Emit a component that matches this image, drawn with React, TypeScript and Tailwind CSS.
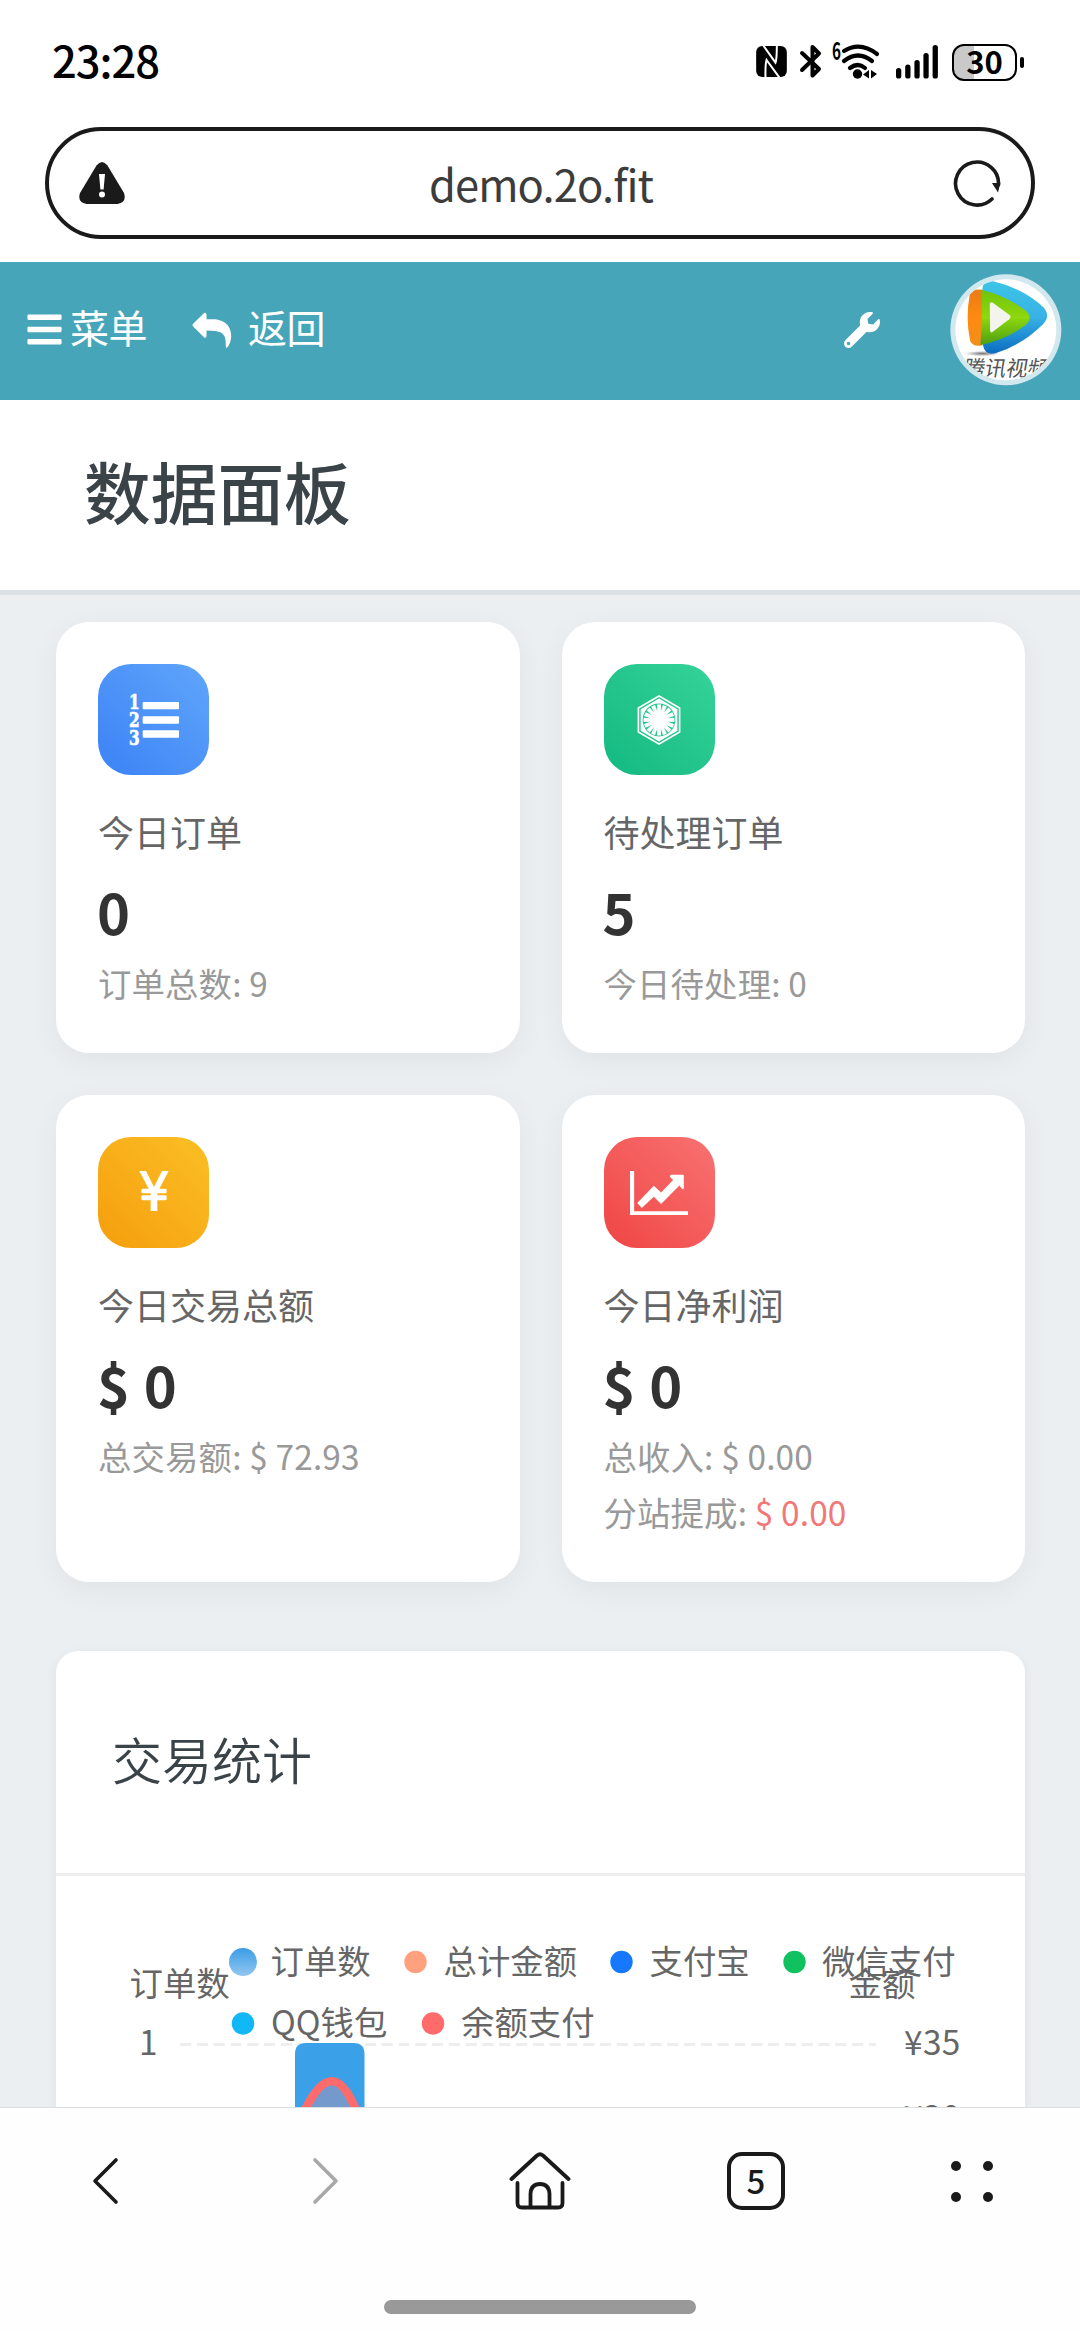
import React from "react";
import { FaBars, FaFirstOrder, FaWrench } from "react-icons/fa";

interface StatProps {
  icon: React.ReactNode;
  iconBg: string;
  label: string;
  value: string;
  children: React.ReactNode;
}

const StatCard = (props: StatProps) => {
  return (
    <div className="rounded-[33px] bg-white p-[42px] shadow-[0_8px_30px_rgba(0,0,0,0.05)]">
      <div
        className={
          "flex h-[111px] w-[111px] items-center justify-center rounded-[33px] text-white " +
          props.iconBg
        }
      >
        {props.icon}
      </div>
      <p className="mt-[29px] h-[54px] text-[36px] leading-[54px] text-[#666]">
        {props.label}
      </p>
      <p className="-ml-px mt-[11px] h-[86px] text-[56px] font-bold leading-[84px] tracking-[0.5px] text-[#333]">
        {props.value}
      </p>
      <div className="text-[33.4px] leading-[56px] tracking-[0.15px] text-[#999]">
        {props.children}
      </div>
    </div>
  );
};

const ListIcon = () => {
  return (
    <svg className="h-[50px] w-[50px] overflow-visible" viewBox="0 0 150 150" fill="currentColor">
      <g fontFamily="DejaVu Serif, serif" fontSize="59" fontWeight="700" stroke="currentColor" strokeWidth="2">
        <text x="0" y="43" textLength="32" lengthAdjust="spacingAndGlyphs">1</text>
        <text x="0" y="96" textLength="32" lengthAdjust="spacingAndGlyphs">2</text>
        <text x="0" y="149" textLength="32" lengthAdjust="spacingAndGlyphs">3</text>
      </g>
      <rect x="41" y="21" width="109" height="22" rx="3" />
      <rect x="41" y="64" width="109" height="22" rx="3" />
      <rect x="41" y="106" width="109" height="22" rx="3" />
    </svg>
  );
};

const StatusBar = () => {
  return (
    <div className="flex h-[127px] items-start justify-between pl-[52px] pr-14 text-black">
      <span className="mt-[28px] text-[43.5px] font-medium leading-[64px] tracking-[-1px]">
        23:28
      </span>
      <div className="mt-[42px] flex h-10 items-start">
        {/* nfc */}
        <svg className="mt-[4px] h-[31px] w-[31px]" viewBox="0 0 92 93">
          <rect width="92" height="93" rx="18" />
          <path
            d="M21 -2 L58 50 Q62 40 62 -2 M70 95 L31 42 Q27 55 28 95"
            fill="none"
            stroke="#fff"
            strokeWidth="6"
          />
        </svg>
        {/* bluetooth */}
        <svg className="ml-3 mt-[2px] h-[35px] w-[24px]" viewBox="0 0 24 35">
          <path
            d="M3 9 L20 25 L13.500 31.500 V3 L20 9.500 L3 26"
            fill="none"
            stroke="#000"
            strokeWidth="4"
            strokeLinecap="round"
            strokeLinejoin="round"
          />
        </svg>
        {/* wifi 6 */}
        <svg className="ml-[9px] h-[38px] w-[48px] overflow-visible" viewBox="0 0 48 38">
          <text x="0" y="18" fontSize="24" fontWeight="700" textLength="9" lengthAdjust="spacingAndGlyphs">
            6
          </text>
          <path
            d="M12 9 Q28 -1 45 12 M12 19 Q26 8 40 19 M18 26 Q26 20 33 26"
            fill="none"
            stroke="#000"
            strokeWidth="4.200"
            strokeLinecap="round"
          />
          <circle cx="25.500" cy="32" r="4.700" />
          <path d="M37 28v8.500l-6-4zM39 28v8.500l6-4.500z" />
        </svg>
        {/* signal */}
        <svg className="ml-4 mt-[3px] h-[34px] w-[43px]" viewBox="0 0 43 34">
          <rect x="0" y="23" width="5.300" height="10.500" rx="2.600" />
          <rect x="9.200" y="19.500" width="5.300" height="14" rx="2.600" />
          <rect x="18.400" y="15" width="5.300" height="18.500" rx="2.600" />
          <rect x="27.400" y="8" width="5.300" height="25.500" rx="2.600" />
          <rect x="36.600" y="0" width="5.300" height="33.500" rx="2.600" />
        </svg>
        {/* battery */}
        <div className="ml-[13px] mt-[2px] flex items-center gap-[3px]">
          <div className="flex h-[37px] w-[65px] items-center justify-center rounded-[12px] border-[2.5px] border-black bg-[linear-gradient(90deg,#c9c9c9_32%,#fff_32%)] pb-1 text-[31px] font-bold leading-none">
            30
          </div>
          <div className="h-[11px] w-[4px] rounded-full bg-black" />
        </div>
      </div>
    </div>
  );
};

const AddressBar = () => {
  return (
    <div className="mx-[45px] flex h-28 items-center justify-between rounded-full border-4 border-[#1a1a1a] pl-[30px] pr-[30px]">
      <svg className="h-[42px] w-[46px]" viewBox="0 0 46 42">
        <path
          d="M17.500 3.500 Q23 -3.500 28.500 3.500 L45 31 Q48 40 38.500 42 H7.500 Q-2 40 1 31 Z"
          fill="#1a1a1a"
        />
        <path d="M20 12 H26 L24.600 27.500 H21.400 Z" fill="#fff" />
        <circle cx="23" cy="32.500" r="3" fill="#fff" />
      </svg>
      <span className="ml-1 mt-0.5 text-[43.5px] leading-[64px] tracking-[-0.9px] text-[#3c3c3c]">
        demo.2o.fit
      </span>
      <svg className="h-[48px] w-[48px]" viewBox="0 0 48 48">
        <path
          d="M39 40 A21.500 21.500 0 1 1 45.500 26"
          fill="none"
          stroke="#1a1a1a"
          strokeWidth="3.600"
          strokeLinecap="round"
        />
        <path d="M39 24 L47.300 24 L45 33.500 Z" fill="#1a1a1a" />
      </svg>
    </div>
  );
};

const Avatar = () => {
  return (
    <svg className="h-28 w-28" viewBox="0 0 333 335">
      <defs>
        <clipPath id="face">
          <circle cx="166" cy="167" r="151" />
        </clipPath>
        <linearGradient id="blue" x1="0" y1="0" x2="0" y2="1">
          <stop offset="0" stopColor="#3cc4e6" />
          <stop offset="0.500" stopColor="#38b2e6" />
          <stop offset="1" stopColor="#0a6cc0" />
        </linearGradient>
        <linearGradient id="green" x1="0" y1="0" x2="0" y2="1">
          <stop offset="0" stopColor="#6fc40a" />
          <stop offset="0.500" stopColor="#8ed80c" />
          <stop offset="1" stopColor="#4d9f14" />
        </linearGradient>
        <linearGradient id="orange" x1="0" y1="0" x2="0" y2="1">
          <stop offset="0" stopColor="#e87c16" />
          <stop offset="0.500" stopColor="#ff8a10" />
          <stop offset="1" stopColor="#f0901c" />
        </linearGradient>
        <radialGradient id="ground">
          <stop offset="0" stopColor="#777" />
          <stop offset="1" stopColor="#fff" />
        </radialGradient>
      </defs>
      <circle cx="166" cy="167" r="166" fill="#d1e8ee" />
      <circle cx="166" cy="167" r="151" fill="#fff" />
      <g clipPath="url(#face)">
        <ellipse cx="95" cy="238" rx="52" ry="8" fill="url(#ground)" />
        <path
          d="M96 42 Q98 18 128 22 Q215 42 277 98 Q302 124 277 150 Q215 212 135 237 Q103 244 98 214 Q90 125 96 42z"
          fill="url(#blue)"
        />
        <path
          d="M58 62 Q65 42 96 47 L96 213 Q68 220 59 200 Q45 130 58 62z"
          fill="url(#orange)"
        />
        <path
          d="M94 48 Q165 64 226 110 Q248 130 226 152 Q165 198 90 212 Q97 130 94 48z"
          fill="url(#green)"
        />
        <path
          d="M118 90 Q119 82 127 86 L176 122 Q184 128 176 135 L127 173 Q120 178 119 168z"
          fill="#f4f4ee"
        />
        <text
          x="36"
          y="306"
          fontSize="64"
          fill="#555"
          transform="translate(54 0) skewX(-10)"
        >
          腾讯视频
        </text>
      </g>
    </svg>
  );
};

const TopBar = () => {
  return (
    <header className="mt-[22.500px] flex h-[138.500px] items-center bg-[#47a5ba] pb-0.5 pl-[27px] pr-[18px] text-[39px] leading-[58px] text-white">
      <a className="flex items-center gap-2">
        <FaBars className="h-[39px] w-[35px]" />
        <span className="-mt-2 tracking-[-0.5px]">菜单</span>
      </a>
      <a className="ml-[45px] flex items-center gap-4">
        <svg className="h-9 w-10" viewBox="0 0 116 105">
          <path
            d="M38 2 Q42 4 42 8 V21 H68 Q114 28 114 72 Q113 92 101 105 Q98 104 98 100 Q100 68 84 60 Q72 54 42 54 V70 Q41 77 36 75 L3 42 Q-1 38 3 34 L35 3 Q37 1 38 2z"
            fill="#fff"
          />
        </svg>
        <span className="-mt-2 tracking-[-0.5px]">返回</span>
      </a>
      <FaWrench className="ml-auto mr-[70px] h-[36px] w-[36px]" />
      <Avatar />
    </header>
  );
};

// x positions are relative to the card, y to the line under its heading
const legend = [
  { x: 359.500, y: 86, text: 387.500, label: "总计金额", color: "#ffa07f" },
  { x: 565.500, y: 86, text: 593.500, label: "支付宝", color: "#1677ff" },
  { x: 738.500, y: 86, text: 766, label: "微信支付", color: "#10c15f" },
  { x: 187, y: 147.500, text: 215, label: "QQ钱包", color: "#12b7f5" },
  { x: 377, y: 147.500, text: 405, label: "余额支付", color: "#ff6b6b" },
];

const Chart = () => {
  return (
    <svg
      className="block h-[231px] w-[969px]"
      viewBox="0 0 969 231"
      fontSize="33.400"
      fill="#666"
    >
      <defs>
        <linearGradient id="orders" x1="0" y1="0" x2="0" y2="1">
          <stop offset="0" stopColor="#3a9de6" />
          <stop offset="1" stopColor="#92c7f0" />
        </linearGradient>
      </defs>
      <path
        d="M124 168.500 H820"
        stroke="#eee"
        strokeWidth="3"
        strokeDasharray="11.200 5.600"
      />
      <path
        d="M239 232 V178 Q239 167 250 167 H297.500 Q308.500 167 308.500 178 V232z"
        fill="#3aa1e9"
      />
      <path d="M247 238 C264 198 285 198 302 238z" fill="#7399cd" />
      <path
        d="M245 242 C266 195 285 191 303 242"
        fill="none"
        stroke="#ff6b6b"
        strokeWidth="8.400"
      />
      <text x="73.500" y="119.500">订单数</text>
      <text x="792.500" y="119.500">金额</text>
      <text x="83" y="179">1</text>
      <text x="848" y="179" letterSpacing="0.400">¥35</text>
      <text x="848" y="253.500" letterSpacing="0.400">¥30</text>
      <circle cx="187" cy="86" r="14" fill="url(#orders)" />
      <text x="214.500" y="97.500">订单数</text>
      {legend.map((item) => (
        <g key={item.label}>
          <circle cx={item.x} cy={item.y} r="11.200" fill={item.color} />
          <text x={item.text} y={item.y + 11.5}>
            {item.label}
          </text>
        </g>
      ))}
    </svg>
  );
};

const BottomNav = () => {
  return (
    <nav className="flex h-[224px] flex-col items-center border-t-[1.500px] border-[#dcdfe1] bg-[#fefefe]">
      <div className="mt-[43px] grid h-[60px] w-full grid-cols-5 items-center justify-items-center">
        <svg className="mr-[7px] h-[50px] w-[30px]" viewBox="0 0 30 50">
          <path d="M26 4 L5 25 L26 46" fill="none" stroke="#1a1a1a" strokeWidth="3.600" strokeLinecap="round" strokeLinejoin="round" />
        </svg>
        <svg className="ml-[3px] h-[50px] w-[30px]" viewBox="0 0 30 50">
          <path d="M4 4 L25 25 L4 46" fill="none" stroke="#a8a8a8" strokeWidth="3.600" strokeLinecap="round" strokeLinejoin="round" />
        </svg>
        <svg className="h-[58px] w-[62px]" viewBox="0 0 62 58" fill="none" stroke="#1a1a1a" strokeWidth="3.800" strokeLinecap="round" strokeLinejoin="round">
          <path d="M2.500 27 L28 3.500 Q31 1 34 3.500 L59.500 27" />
          <path d="M8.500 31 V51 Q8.500 55.500 13 55.500 H49 Q53.500 55.500 53.500 51 V31" />
          <path d="M21.500 55 V42 Q22 32 31 32 Q40 32 40.500 42 V55" />
        </svg>
        <div className="flex h-[58px] w-[58px] items-center justify-center rounded-[15px] border-4 border-[#1a1a1a] pb-0.5 text-[33px] font-medium leading-none text-[#1a1a1a]">
          5
        </div>
        <div className="grid grid-cols-2 gap-x-[22px] gap-y-[21px]">
          <i className="h-2.5 w-2.5 rounded-full bg-[#1a1a1a]" />
          <i className="h-2.5 w-2.5 rounded-full bg-[#1a1a1a]" />
          <i className="h-2.5 w-2.5 rounded-full bg-[#1a1a1a]" />
          <i className="h-2.5 w-2.5 rounded-full bg-[#1a1a1a]" />
        </div>
      </div>
      <div className="mt-[89px] h-3.5 w-[312px] rounded-full bg-[#999]" />
    </nav>
  );
};

const App = () => {
  return (
    <div
      lang="zh-CN"
      className="flex h-[2331px] w-[1080px] flex-col overflow-hidden bg-white font-['Noto_Sans_CJK_SC',sans-serif]"
    >
      <StatusBar />
      <AddressBar />
      <TopBar />
      <main className="flex-1 overflow-hidden bg-[#ebeff2]">
        <div className="flex h-[195px] items-center border-b-[5px] border-[#dce1e6] bg-white px-[84px] pb-[11px]">
          <h1 className="text-[66.700px] font-medium leading-[100px] text-[#3a4348]">
            数据面板
          </h1>
        </div>
        <div className="ml-14 mr-[55px] mt-[27px] grid grid-cols-2 gap-[42px]">
          <StatCard
            icon={<ListIcon />}
            iconBg="bg-linear-to-tr from-[#3b82f6] to-[#60a5fa]"
            label="今日订单"
            value="0"
          >
            <p>订单总数: 9</p>
          </StatCard>
          <StatCard
            icon={<FaFirstOrder className="h-[50px] w-[50px]" />}
            iconBg="bg-linear-to-tr from-[#10b981] to-[#34d399]"
            label="待处理订单"
            value="5"
          >
            <p>今日待处理: 0</p>
          </StatCard>
          <StatCard
            icon={
              <svg className="-mt-1 h-[40px] w-[30px]" viewBox="0 0 88 120" fill="currentColor">
                <path d="M0 0 H20 L44 48 L68 0 H88 L60 53 H78 Q82 53 82 57 V63 Q82 67 78 67 H54 V73 H78 Q82 73 82 77 V84 Q82 88 78 88 H54 V120 H34 V88 H10 Q6 88 6 84 V77 Q6 73 10 73 H34 V67 H10 Q6 67 6 63 V57 Q6 53 10 53 H28z" />
              </svg>
            }
            iconBg="bg-linear-to-tr from-[#f59e0b] to-[#fbbf24]"
            label="今日交易总额"
            value="$ 0"
          >
            <p>总交易额: $ 72.93</p>
          </StatCard>
          <StatCard
            icon={
              <svg className="h-11 w-[58px]" viewBox="0 0 168 131" fill="currentColor" preserveAspectRatio="none">
                <path d="M0 0 H12 V120 H168 V131 H0z" />
                <path d="M21 95 L69 44 L90 64 L125 27 L116 18 Q115 11 119 11 H154 Q156 11 156 14 V52 Q153 56 150 52 L143 43 L90 98 L69 77 L34 110z" />
              </svg>
            }
            iconBg="bg-linear-to-tr from-[#ef4444] to-[#f87171]"
            label="今日净利润"
            value="$ 0"
          >
            <p>总收入: $ 0.00</p>
            <p>
              分站提成: <span className="text-[#f07878]">$ 0.00</span>
            </p>
          </StatCard>
        </div>
        <div className="ml-14 mr-[55px] mt-[69px] rounded-t-[22px] bg-white shadow-[0_3px_12px_rgba(0,0,0,0.06)]">
          <h3 className="flex h-[225px] items-center border-b-[3px] border-[#eee] px-14 pb-2 text-[50px] font-[350] leading-[75px] text-[#3a4348]">
            交易统计
          </h3>
          <Chart />
        </div>
      </main>
      <BottomNav />
    </div>
  );
};

export default App;
